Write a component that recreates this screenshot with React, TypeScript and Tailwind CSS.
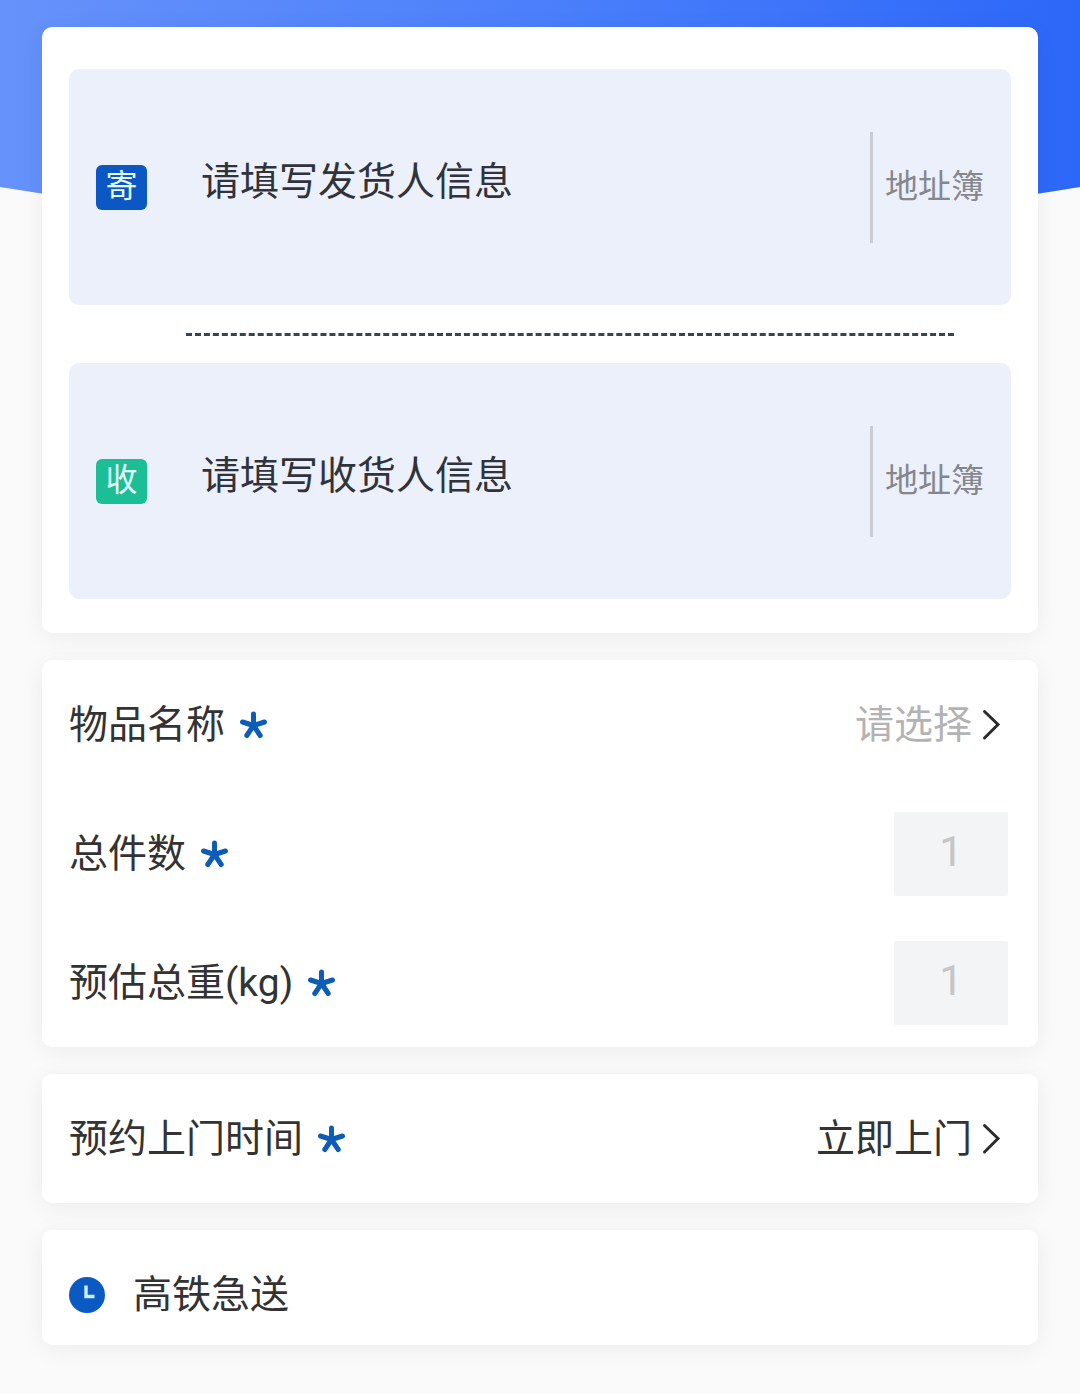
import { useState } from 'react';

type AddressRowProps = {
  badge: string;
  badgeColor: string;
  text: string;
};

function RequiredMark() {
  return (
    <svg width="28" height="28" viewBox="0 0 28 28" className="ml-[14px] shrink-0" aria-hidden="true">
      <path
        d="M14.5 14.5V3M14.5 14.5L3.5 11M14.5 14.5L25.5 11M14.5 14.5L7.8 24.5M14.5 14.5L21.2 24.5"
        stroke="#0d5cb6"
        strokeWidth="5"
        strokeLinecap="round"
        fill="none"
      />
    </svg>
  );
}

function ArrowRight() {
  return (
    <svg width="36" height="36" viewBox="0 0 36 36" className="shrink-0" aria-hidden="true">
      <path d="M12.5 4.5L26 17.5L12.5 31" stroke="#2b2b2b" strokeWidth="3" strokeLinecap="round" fill="none" />
    </svg>
  );
}

function AddressRow({ badge, badgeColor, text }: AddressRowProps) {
  return (
    <div className="flex h-[236px] items-center rounded-[10px] bg-[#ebf0fa] px-[27px]">
      <span
        className={`flex h-[45px] w-[51px] items-start justify-center rounded-[6px] text-[32px] leading-[42px] text-[#e4fbff] ${badgeColor}`}
      >
        {badge}
      </span>
      <button type="button" className="ml-[54px] flex-1 cursor-pointer pb-[10px] text-left text-[39px] leading-[58px] text-[#30333b]">
        {text}
      </button>
      <button
        type="button"
        className="flex h-[111px] cursor-pointer items-center border-l-[3px] border-[#c9ccd5] pl-3 text-[33px] leading-[48px] text-[#85878d]"
      >
        地址簿
      </button>
    </div>
  );
}

export default function App() {
  const [count, setCount] = useState<string>('');
  const [weight, setWeight] = useState<string>('');

  const cardStyle = 'rounded-[10px] bg-white shadow-[0_4px_24px_rgba(0,0,0,0.06)]';
  const rowStyle = 'flex h-[129px] items-center justify-between pl-[27px] pr-[30px]';
  const labelStyle = 'flex items-center';
  const inputStyle =
    'h-[84px] w-[114px] rounded-[2px] bg-[#f2f4f5] pb-1 text-center text-[42px] leading-[58px] text-[#c4c6c8] outline-none placeholder:text-[#c4c6c8]';

  return (
    <div className="relative min-h-screen bg-[#fafafa] font-[Roboto,'Noto_Sans_CJK_SC',sans-serif] text-[39px] leading-[58px] text-[#333333]">
      {/* 顶部弧形背景 */}
      <svg
        className="absolute left-0 top-0 h-[240px] w-full"
        viewBox="0 0 1080 240"
        preserveAspectRatio="none"
        aria-hidden="true"
      >
        <defs>
          <linearGradient id="hero" x1="0" y1="0" x2="1" y2="0">
            <stop offset="0" stopColor="#6692fa" />
            <stop offset="0.5" stopColor="#4b7ffb" />
            <stop offset="1" stopColor="#2c67f8" />
          </linearGradient>
        </defs>
        <path d="M0 0H1080V187Q540 277 0 187Z" fill="url(#hero)" />
      </svg>

      <main className="relative flex flex-col gap-[27px] px-[42px] pb-12 pt-[27px]">
        <section className={`${cardStyle} px-[27px] pb-[34px] pt-[42px]`}>
          <AddressRow badge="寄" badgeColor="bg-[#0b57c4]" text="请填写发货人信息" />
          <div className="mb-[27px] ml-[117px] mr-[57px] mt-[28px] border-t-[3px] border-dashed border-[#33474f]" />
          <AddressRow badge="收" badgeColor="bg-[#1cbf95]" text="请填写收货人信息" />
        </section>

        <section className={cardStyle}>
          <div className={rowStyle}>
            <span className={labelStyle}>
              物品名称
              <RequiredMark />
            </span>
            <button type="button" className="flex cursor-pointer items-center text-[#b3b3b3]">
              请选择
              <ArrowRight />
            </button>
          </div>
          <div className={rowStyle}>
            <label htmlFor="count" className={labelStyle}>
              总件数
              <RequiredMark />
            </label>
            <input
              id="count"
              inputMode="numeric"
              placeholder="1"
              value={count}
              onChange={(e) => setCount(e.target.value)}
              className={inputStyle}
            />
          </div>
          <div className={rowStyle}>
            <label htmlFor="weight" className={labelStyle}>
              预估总重(kg)
              <RequiredMark />
            </label>
            <input
              id="weight"
              inputMode="decimal"
              placeholder="1"
              value={weight}
              onChange={(e) => setWeight(e.target.value)}
              className={inputStyle}
            />
          </div>
        </section>

        <section className={cardStyle}>
          <div className={rowStyle}>
            <span className={labelStyle}>
              预约上门时间
              <RequiredMark />
            </span>
            <button type="button" className="flex cursor-pointer items-center">
              立即上门
              <ArrowRight />
            </button>
          </div>
        </section>

        <section className={`${cardStyle} flex items-center px-[27px] pb-[21px] pt-[36px]`}>
          <svg width="36" height="36" viewBox="0 0 36 36" aria-hidden="true">
            <circle cx="18" cy="18" r="18" fill="#0b5ac4" />
            <path d="M17 8.5V19.5H25.5" stroke="#c9f3ff" strokeWidth="3.4" fill="none" />
          </svg>
          <h2 className="ml-[28px]">高铁急送</h2>
        </section>
      </main>
    </div>
  );
}
